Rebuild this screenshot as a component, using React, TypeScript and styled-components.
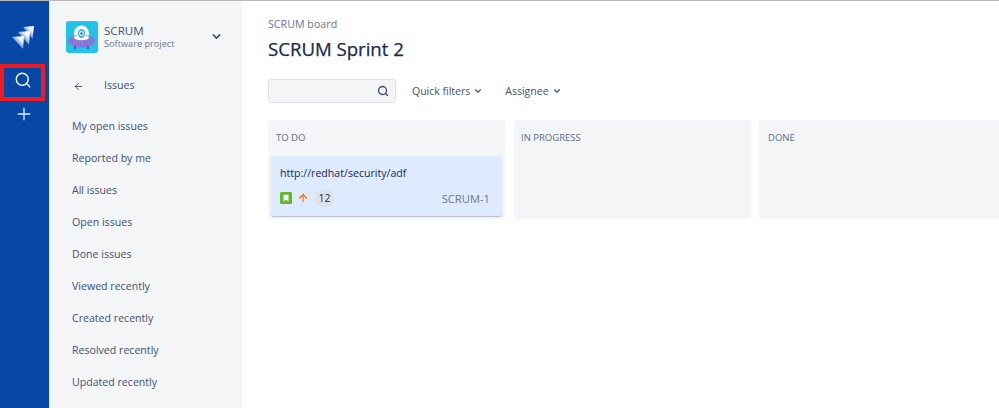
import React from 'react';
import styled, { createGlobalStyle } from 'styled-components';
import { ArrowLeft, ArrowUp, ChevronDown, Plus, Search } from 'lucide-react';

const GlobalStyle = createGlobalStyle`
  html, body {
    margin: 0;
    padding: 0;
    background: #fff;
    overflow: hidden;
  }
  * { box-sizing: border-box; }
`;

const Page = styled.div`
  width: 999px;
  height: 408px;
  display: flex;
  overflow: hidden;
  border-top: 1px solid #b9b9b9;
  font-family: 'Open Sans', 'Noto Sans', sans-serif;
  color: #42526e;
`;

const Rail = styled.nav`
  position: relative;
  width: 50px;
  flex: none;
  display: flex;
  flex-direction: column;
  align-items: center;
  background: #0747a6;
  border-right: 1px solid #dfe6f1;
  padding-top: 24px;
  padding-right: 1px;
  color: #deebff;
`;

const RailLogo = styled.svg`
  width: 24px;
  height: 25px;
  margin-left: -2px;
`;

const RailButton = styled.div<{ $top: number; $left?: number }>`
  height: 24px;
  display: flex;
  align-items: center;
  justify-content: center;
  margin-top: ${(p) => p.$top}px;
  margin-left: ${(p) => p.$left ?? 0}px;
`;

const Highlight = styled.div`
  position: absolute;
  left: 0;
  top: 63px;
  width: 45px;
  height: 37px;
  border: 4px solid #ed1c24;
`;

const Sidebar = styled.aside`
  width: 192px;
  flex: none;
  background: #f4f5f7;
  padding: 19px 0 0 16px;
`;

const ProjectHead = styled.header`
  display: flex;
  align-items: center;
  height: 33px;
`;

const Avatar = styled.svg`
  width: 32px;
  height: 32px;
  flex: none;
  border-radius: 3px;
`;

const ProjectText = styled.div`
  margin-left: 6px;
  width: 106px;
`;

const ProjectName = styled.div`
  font-size: 11.6px;
  line-height: 14px;
  color: #42526e;
`;

const ProjectKind = styled.div`
  font-size: 9.2px;
  line-height: 12px;
  color: #6b778c;
  white-space: nowrap;
`;

const BackRow = styled.div`
  display: flex;
  align-items: center;
  height: 20px;
  margin: 23px 0 0 7px;
  font-size: 10.6px;
`;

const BackLabel = styled.span`
  margin-left: 20px;
  margin-top: -3px;
`;

const NavList = styled.ul`
  list-style: none;
  margin: 14px 0 0 6px;
  padding: 0;
`;

const NavItem = styled.li`
  height: 32px;
  line-height: 32px;
  font-size: 10.6px;
  white-space: nowrap;
`;

const Main = styled.main`
  flex: 1;
  min-width: 0;
  padding: 15px 0 0 26px;
`;

const Crumb = styled.div`
  font-size: 10.7px;
  line-height: 16px;
  color: #6b778c;
`;

const Title = styled.h1`
  margin: 3px 0 0;
  font-size: 18.6px;
  line-height: 27px;
  font-weight: 400;
  color: #172b4d;
  -webkit-text-stroke: 0.25px #172b4d;
`;

const Toolbar = styled.div`
  display: flex;
  align-items: center;
  height: 24px;
  margin-top: 17px;
`;

const SearchBox = styled.div`
  width: 128px;
  height: 24px;
  display: flex;
  align-items: center;
  justify-content: flex-end;
  padding-right: 6px;
  background: #f4f5f7;
  border: 1px solid #dfe1e6;
  border-radius: 3px;
`;

const Filter = styled.div<{ $left: number }>`
  display: flex;
  align-items: center;
  gap: 3px;
  font-size: 10.5px;
  margin-left: ${(p) => p.$left}px;
`;

const Board = styled.div`
  display: flex;
  margin-top: 17px;
`;

const Column = styled.section<{ $w: number; $gap: number }>`
  width: ${(p) => p.$w}px;
  margin-right: ${(p) => p.$gap}px;
  flex: none;
  height: 99px;
  padding: 0 3px;
  background: #f4f5f7;
  border-radius: 3px;
`;

const ColumnTitle = styled.h2<{ $left: number }>`
  margin: 0;
  padding: 11px 0 0 ${(p) => p.$left}px;
  height: 36px;
  font-size: 9.5px;
  line-height: 14px;
  font-weight: 400;
  color: #5e6c84;
`;

const Card = styled.article`
  height: 60px;
  padding: 9px 12px 0 9px;
  background: #deebff;
  border-radius: 3px;
  box-shadow: 0 1px 1px rgba(9, 30, 66, 0.25);
`;

const CardTitle = styled.div`
  font-size: 10.6px;
  line-height: 16px;
  color: #172b4d;
`;

const CardFooter = styled.div`
  display: flex;
  align-items: center;
  height: 18px;
  margin-top: 8px;
`;

const StoryIcon = styled.svg`
  width: 12px;
  height: 12px;
`;

const Priority = styled(ArrowUp)`
  margin-left: 5px;
`;

const Estimate = styled.span`
  width: 21px;
  height: 17px;
  margin-left: 5px;
  border-radius: 9px;
  background: #dfe1e6;
  font-size: 10.4px;
  line-height: 17px;
  text-align: center;
  color: #172b4d;
`;

const IssueKey = styled.span`
  margin-left: auto;
  font-size: 11.2px;
  color: #6b778c;
`;

const links = [
  'My open issues',
  'Reported by me',
  'All issues',
  'Open issues',
  'Done issues',
  'Viewed recently',
  'Created recently',
  'Resolved recently',
  'Updated recently',
];

const App: React.FC = () => {
  return (
    <>
      <GlobalStyle />
      <Page>
        <Rail>
          <RailLogo viewBox="0 0 24 25">
            <defs>
              <linearGradient id="chev" x1="0.95" y1="0" x2="0.3" y2="0.7">
                <stop offset="0" stopColor="#ffffff" />
                <stop offset="0.4" stopColor="#eef4ff" />
                <stop offset="1" stopColor="#2466c8" />
              </linearGradient>
            </defs>
            <path fill="url(#chev)" d="M12 2l11-1-1.5 13z" />
            <path fill="url(#chev)" d="M7 7l12-1-1 14z" />
            <path fill="url(#chev)" d="M1 12l12-1-1 13z" />
          </RailLogo>
          <RailButton $top={18} $left={-2}>
            <Search size={18} strokeWidth={1.8} color="#fff" />
          </RailButton>
          <RailButton $top={10}>
            <Plus size={20} strokeWidth={1.6} color="#deebff" />
          </RailButton>
          <Highlight />
        </Rail>
        <Sidebar>
          <ProjectHead>
            <Avatar viewBox="0 0 32 32">
              <rect width="32" height="32" fill="#1fc4e6" />
              <path d="M8 18V12a7.5 7.5 0 0 1 15 0v6z" fill="#fff" />
              <ellipse cx="15.5" cy="20" rx="13.5" ry="6.5" fill="#8777d9" />
              <ellipse cx="15.5" cy="16.5" rx="7.5" ry="2.8" fill="#fff" />
              <ellipse cx="15.5" cy="12.5" rx="3.6" ry="4.6" fill="#1fc4e6" />
              <circle cx="15.5" cy="12.5" r="2.4" fill="#fff" />
              <circle cx="15.5" cy="12.5" r="1.2" fill="#5243aa" />
              <path d="M9 25v3M22 25v3" stroke="#5243aa" strokeWidth="1.6" />
            </Avatar>
            <ProjectText>
              <ProjectName>SCRUM</ProjectName>
              <ProjectKind>Software project</ProjectKind>
            </ProjectText>
            <ChevronDown size={13} strokeWidth={3} color="#42526e" />
          </ProjectHead>
          <BackRow>
            <ArrowLeft size={11} strokeWidth={2} />
            <BackLabel>Issues</BackLabel>
          </BackRow>
          <NavList>
            {links.map((link) => (
              <NavItem key={link}>{link}</NavItem>
            ))}
          </NavList>
        </Sidebar>
        <Main>
          <Crumb>SCRUM board</Crumb>
          <Title>SCRUM Sprint 2</Title>
          <Toolbar>
            <SearchBox>
              <Search size={12} strokeWidth={2.6} color="#42526e" />
            </SearchBox>
            <Filter $left={16}>
              Quick filters <ChevronDown size={10} strokeWidth={2.6} />
            </Filter>
            <Filter $left={22}>
              Assignee <ChevronDown size={10} strokeWidth={2.6} />
            </Filter>
          </Toolbar>
          <Board>
            <Column $w={237} $gap={9}>
              <ColumnTitle $left={5}>TO DO</ColumnTitle>
              <Card>
                <CardTitle>http://redhat/security/adf</CardTitle>
                <CardFooter>
                  <StoryIcon viewBox="0 0 12 12">
                    <rect width="12" height="12" rx="1.5" fill="#5eb82e" />
                    <path d="M3.5 2.8h5v6.6L6 7.6 3.5 9.4z" fill="#fff" />
                  </StoryIcon>
                  <Priority size={12} strokeWidth={2.6} color="#f57a0c" />
                  <Estimate>12</Estimate>
                  <IssueKey>SCRUM-1</IssueKey>
                </CardFooter>
              </Card>
            </Column>
            <Column $w={237} $gap={8}>
              <ColumnTitle $left={4}>IN PROGRESS</ColumnTitle>
            </Column>
            <Column $w={240} $gap={0}>
              <ColumnTitle $left={6}>DONE</ColumnTitle>
            </Column>
          </Board>
        </Main>
      </Page>
    </>
  );
};

export default App;
